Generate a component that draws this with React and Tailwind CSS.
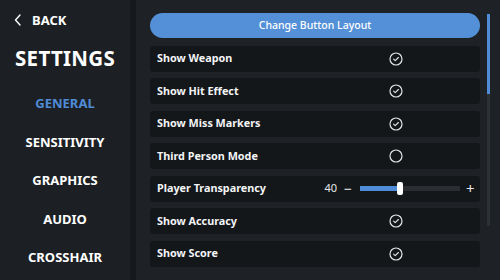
import React from 'react';

const rows = [
    { label: 'Show Weapon', on: true },
    { label: 'Show Hit Effect', on: true },
    { label: 'Show Miss Markers', on: true },
    { label: 'Third Person Mode', on: false },
    { label: 'Player Transparency', slider: 40 },
    { label: 'Show Accuracy', on: true },
    { label: 'Show Score', on: true },
];

const menu = ['GENERAL', 'SENSITIVITY', 'GRAPHICS', 'AUDIO', 'CROSSHAIR'];

const Check = ({ on }) => (
    <svg width="14" height="14" viewBox="0 0 14 14" fill="none">
        <circle cx="7" cy="7" r="6" stroke="#e5e7eb" strokeWidth="1.2" />
        {on && <path d="M4.6 7.2l1.6 1.5 3.2-3.2" stroke="#e5e7eb" strokeWidth="1.1" strokeLinecap="round" strokeLinejoin="round" />}
    </svg>
);

const Slider = ({ value }) => (
    <div className="flex items-center text-[11px] text-gray-200">
        <span className="w-[14px] text-right">{value}</span>
        <span className="ml-[7px] text-[14px] leading-none">−</span>
        <div className="relative ml-[8px] h-[5px] w-[100px] bg-[#2a2e33]">
            <div className="h-full w-[39px] bg-[#4f8bd6]" />
            <div className="absolute left-[37px] top-[-4px] h-[13px] w-[6px] rounded-[2px] bg-white" />
        </div>
        <span className="ml-[6px] text-[15px] leading-none">+</span>
    </div>
);

export default function App() {
    return (
        <div className="flex h-[280px] w-[500px] bg-[#1e2226] text-white" style={{ fontFamily: '"Noto Sans", "Open Sans", sans-serif' }}>
            <aside className="flex w-[130px] flex-col bg-[#1c2024]">
                <div className="mt-[12px] flex items-center pl-[14px]">
                    <svg width="8" height="12" viewBox="0 0 8 12" fill="none">
                        <path d="M6 1L1.5 6 6 11" stroke="#fff" strokeWidth="1.4" strokeLinecap="round" strokeLinejoin="round" />
                    </svg>
                    <span className="ml-[10px] text-[13px] font-bold leading-[16px]">BACK</span>
                </div>
                <div className="mt-[16px] pl-[15px] text-[20.5px] font-bold leading-[28px] tracking-[0.3px]">SETTINGS</div>
                <nav className="mt-[22px] flex flex-col items-center">
                    {menu.map((m, i) => (
                        <div key={m} className={`h-[38.5px] text-[13px] font-bold leading-[18px] ${i === 0 ? 'text-[#4f8bd6]' : 'text-white'}`}>{m}</div>
                    ))}
                </nav>
            </aside>
            <div className="w-[6px] bg-[#16191c]" />
            <main className="flex flex-1 pl-[14px] pt-[13px]">
                <div className="flex w-[330px] flex-col gap-[6.5px]">
                    <button className="mb-[1px] h-[25px] rounded-full bg-[#5490d8] text-[10.5px] font-medium text-white">Change Button Layout</button>
                    {rows.map(r => (
                        <div key={r.label} className="flex h-[26px] items-center rounded-[3px] bg-[#14171a] pl-[7px]">
                            <span className="w-[160px] text-[10.8px] font-bold text-gray-100">{r.label}</span>
                            {r.slider !== undefined ? (
                                <div className="ml-[6px]"><Slider value={r.slider} /></div>
                            ) : (
                                <div className="ml-[72px] flex"><Check on={r.on} /></div>
                            )}
                        </div>
                    ))}
                </div>
                <div className="ml-[7px] mt-[1px] h-[212px] w-[3px] bg-[#2c3136]">
                    <div className="h-[80px] w-full bg-[#4f8bd6]" />
                </div>
            </main>
        </div>
    );
}
